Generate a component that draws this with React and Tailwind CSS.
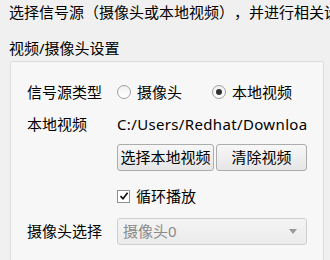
const FONT = { fontFamily: '"Noto Sans", "Noto Sans CJK SC", sans-serif' }

function Radio({ checked, label }) {
  return (
    <label className="flex items-center gap-[6px]">
      <span className="flex h-[14px] w-[14px] items-center justify-center rounded-full border border-[#a0a0a0] bg-gradient-to-b from-[#f0f0f0] to-[#ffffff]">
        {checked && <span className="h-[6px] w-[6px] rounded-full bg-[#333]" />}
      </span>
      <span>{label}</span>
    </label>
  )
}

function Button({ children, className = '' }) {
  return (
    <button className={`h-[27px] rounded-[3px] border border-[#acacac] bg-gradient-to-b from-[#f7f7f7] to-[#e6e6e6] text-[15px] leading-none text-black ${className}`}>
      {children}
    </button>
  )
}

export default function App() {
  return (
    <div className="h-[260px] w-[330px] overflow-hidden bg-[#f0f0f0] text-[15px] text-black [text-spacing-trim:space-all]" style={FONT}>
      <div className="whitespace-nowrap pl-[9px] pt-[2px] leading-[20px]">
        选择信号源（摄像头或本地视频），并进行相关设置
      </div>
      <div className="mt-[16px] pl-[9px] leading-[20px]">视频/摄像头设置</div>

      <div className="ml-[10px] mt-[3px] h-[220px] w-[314px] rounded-[2px] border border-[#dcdcdc] bg-[#f7f7f7] pl-[16px] pr-[16px] pt-[18px]">
        <div className="flex h-[24px] items-center">
          <span className="w-[90px]">信号源类型</span>
          <div className="flex items-center">
            <Radio label="摄像头" />
            <div className="ml-[30px]"><Radio checked label="本地视频" /></div>
          </div>
        </div>

        <div className="mt-[8px] flex h-[24px] items-center">
          <span className="w-[90px] shrink-0">本地视频</span>
          <span className="w-[190px] overflow-hidden whitespace-nowrap tracking-[0.35px]">C:/Users/Redhat/Downloads/video.mp4</span>
        </div>

        <div className="mt-[8px] flex pl-[90px]">
          <Button className="w-[97px]">选择本地视频</Button>
          <Button className="ml-[2px] w-[91px]">清除视频</Button>
        </div>

        <div className="mt-[13px] flex h-[24px] items-center pl-[90px]">
          <span className="flex h-[13px] w-[13px] items-center justify-center border border-[#8f8f8f] bg-white">
            <svg viewBox="0 0 10 10" className="h-[10px] w-[10px]">
              <path d="M1.5 5.2 L4 7.8 L8.6 1.8" fill="none" stroke="#111" strokeWidth="1.7" />
            </svg>
          </span>
          <span className="ml-[6px]">循环播放</span>
        </div>

        <div className="mt-[10px] flex items-center">
          <span className="w-[90px]">摄像头选择</span>
          <div className="flex h-[27px] w-[190px] items-center justify-between rounded-[3px] border border-[#cfcfcf] bg-gradient-to-b from-[#f4f4f4] to-[#ebebeb] pl-[5px] pr-[9px] text-[#8a8a8a]">
            <span>摄像头0</span>
            <svg viewBox="0 0 8 5" className="h-[5px] w-[8px]">
              <path d="M0 0 L8 0 L4 5 Z" fill="#9a9a9a" />
            </svg>
          </div>
        </div>
      </div>
    </div>
  )
}
